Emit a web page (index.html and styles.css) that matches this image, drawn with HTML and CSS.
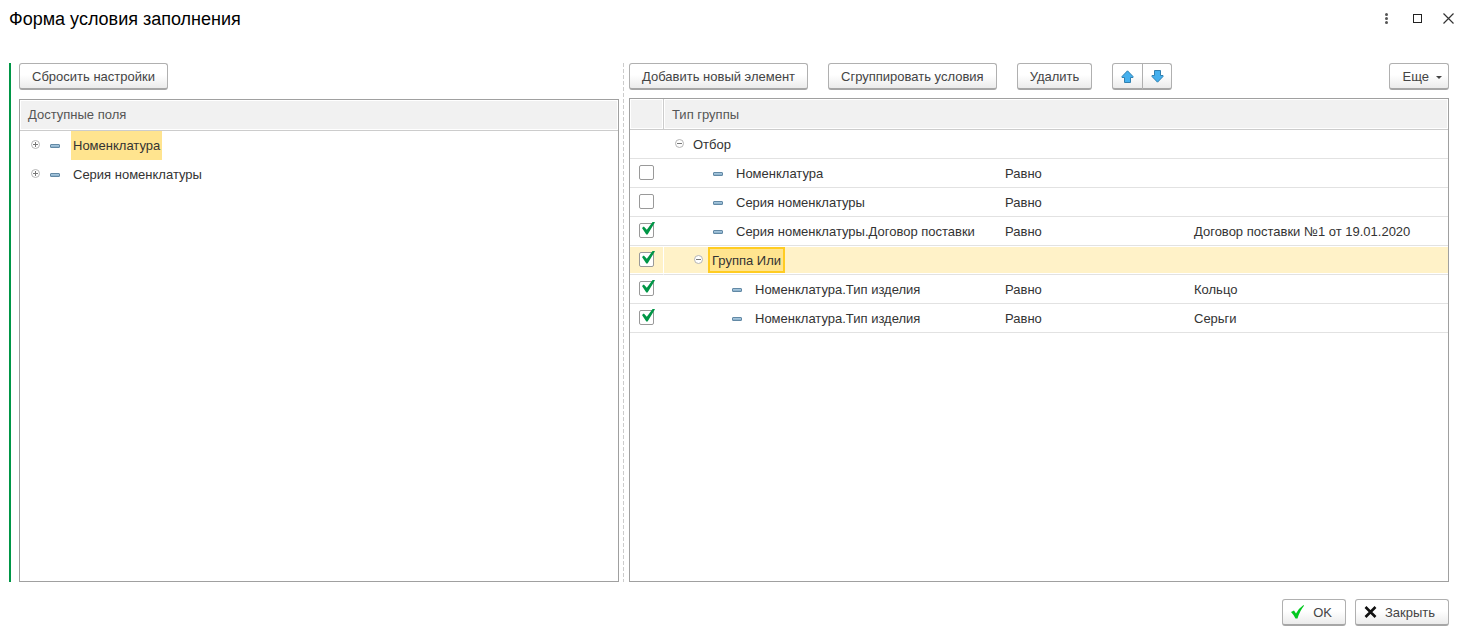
FILE: index.html
```html
<!DOCTYPE html>
<html lang="ru">
<head>
<meta charset="utf-8">
<meta name="viewport" content="width=device-width, initial-scale=1">
<title>Форма условия заполнения</title>
<link rel="stylesheet" href="styles.css">
</head>
<body>
<svg class="sprites" width="0" height="0" aria-hidden="true">
  <defs>
    <linearGradient id="dash-fill" x1="0" y1="0" x2="0" y2="1">
      <stop offset="0" stop-color="#b5d3e8"/><stop offset="1" stop-color="#7fa6c1"/>
    </linearGradient>
  </defs>
  <symbol id="plus" viewBox="0 0 9 9"><circle cx="4.5" cy="4.5" r="4" fill="#fff" stroke="#b4b4b4"/><path d="M2 4.5h5M4.5 2v5" stroke="#777"/></symbol>
  <symbol id="minus" viewBox="0 0 9 9"><circle cx="4.5" cy="4.5" r="4" fill="#fff" stroke="#b4b4b4"/><path d="M2 4.5h5" stroke="#777"/></symbol>
  <symbol id="dash" viewBox="0 0 10 4"><rect x=".5" y=".5" width="9" height="3" rx=".5" fill="url(#dash-fill)" stroke="#6289a5"/></symbol>
</svg>
<header class="titlebar">
  <h1 class="title">Форма условия заполнения</h1>
  <div class="window-actions">
    <button class="win-btn" aria-label="Меню"><svg width="11" height="11" viewBox="0 0 11 11" fill="#555"><circle cx="5.5" cy="1.5" r="1.5"/><circle cx="5.5" cy="5.5" r="1.5"/><circle cx="5.5" cy="9.5" r="1.5"/></svg></button>
    <button class="win-btn" aria-label="Развернуть"><svg width="9" height="9" viewBox="0 0 9 9"><rect x=".5" y=".5" width="8" height="8" fill="none" stroke="#222"/></svg></button>
    <button class="win-btn" aria-label="Закрыть окно"><svg width="11" height="11" viewBox="0 0 11 11"><path d="M.5 .5l10 10M10.5 .5l-10 10" stroke="#333" stroke-width="1.2"/></svg></button>
  </div>
</header>
<main class="workspace">
  <section class="fields">
    <div class="toolbar"><button class="btn">Сбросить настройки</button></div>
    <div class="panel">
      <h2 class="panel-head">Доступные поля</h2>
      <ul class="tree">
        <li class="tree-item"><svg class="toggle"><use href="#plus"/></svg><svg class="dash"><use href="#dash"/></svg><span class="tree-label current">Номенклатура</span></li>
        <li class="tree-item"><svg class="toggle"><use href="#plus"/></svg><svg class="dash"><use href="#dash"/></svg><span class="tree-label">Серия номенклатуры</span></li>
      </ul>
    </div>
  </section>
  <div class="splitter"></div>
  <section class="conditions">
    <div class="toolbar">
      <button class="btn">Добавить новый элемент</button>
      <button class="btn">Сгруппировать условия</button>
      <button class="btn">Удалить</button>
      <div class="btn-group">
        <button class="btn arrow" aria-label="Вверх"><svg width="13" height="13" viewBox="0 0 13 13"><path d="M6.5 .8L12 6.5V7.5H9.5V12.5H3.5V7.5H1V6.5Z" fill="#45b0ee" stroke="#3080b0"/></svg></button>
        <button class="btn arrow" aria-label="Вниз"><svg width="13" height="13" viewBox="0 0 13 13"><path d="M6.5 12.2L12 6.5V5.5H9.5V.5H3.5V5.5H1V6.5Z" fill="#45b0ee" stroke="#3080b0"/></svg></button>
      </div>
      <button class="btn more">Еще<svg width="6" height="3" viewBox="0 0 6 3"><path d="M0 0h6L3 3z" fill="#444"/></svg></button>
    </div>
    <div class="panel">
      <table class="grid">
        <colgroup><col class="col-check"><col class="col-name"><col class="col-op"><col></colgroup>
        <thead><tr><th></th><th colspan="3" scope="colgroup">Тип группы</th></tr></thead>
        <tbody>
          <tr><td></td><td><div class="node"><svg class="toggle"><use href="#minus"/></svg><span>Отбор</span></div></td><td></td><td></td></tr>
          <tr><td><input class="check" type="checkbox" aria-label="Номенклатура"></td><td><div class="node leaf"><svg class="dash"><use href="#dash"/></svg><span>Номенклатура</span></div></td><td>Равно</td><td></td></tr>
          <tr><td><input class="check" type="checkbox" aria-label="Серия номенклатуры"></td><td><div class="node leaf"><svg class="dash"><use href="#dash"/></svg><span>Серия номенклатуры</span></div></td><td>Равно</td><td></td></tr>
          <tr><td><input class="check" type="checkbox" checked aria-label="Серия номенклатуры.Договор поставки"></td><td><div class="node leaf"><svg class="dash"><use href="#dash"/></svg><span>Серия номенклатуры.Договор поставки</span></div></td><td>Равно</td><td>Договор поставки №1 от 19.01.2020</td></tr>
          <tr class="selected"><td><input class="check" type="checkbox" checked aria-label="Группа Или"></td><td><div class="node group"><svg class="toggle"><use href="#minus"/></svg><span class="focus">Группа Или</span></div></td><td></td><td></td></tr>
          <tr><td><input class="check" type="checkbox" checked aria-label="Номенклатура.Тип изделия: Кольцо"></td><td><div class="node deep"><svg class="dash"><use href="#dash"/></svg><span>Номенклатура.Тип изделия</span></div></td><td>Равно</td><td>Кольцо</td></tr>
          <tr><td><input class="check" type="checkbox" checked aria-label="Номенклатура.Тип изделия: Серьги"></td><td><div class="node deep"><svg class="dash"><use href="#dash"/></svg><span>Номенклатура.Тип изделия</span></div></td><td>Равно</td><td>Серьги</td></tr>
        </tbody>
      </table>
    </div>
  </section>
</main>
<footer class="footer">
  <button class="btn icon-btn"><svg width="14" height="14" viewBox="0 0 14 14"><path d="M0 7L3 5.500L5 8.500Q8 3 12.500 0L13 .8Q9 5.500 6.500 13.500H4.500Q3 10 0 7Z" fill="#00c81e"/></svg>OK</button>
  <button class="btn icon-btn"><svg width="13" height="12" viewBox="0 0 13 12"><path d="M1.500 1l10 10M11.500 1l-10 10" stroke="#111" stroke-width="2.600"/></svg>Закрыть</button>
</footer>
</body>
</html>
```
FILE: styles.css
```css
* { box-sizing: border-box; }

body {
  margin: 0;
  min-height: 100vh;
  display: flex;
  flex-direction: column;
  padding: 0 16px 9px 9px;
  background: #fff;
  color: #333;
  font: 13px/16px "Liberation Sans", Arial, sans-serif;
}

.sprites { position: absolute; }

svg { flex: none; display: block; }

.titlebar {
  display: flex;
  justify-content: space-between;
  align-items: center;
  height: 37px;
  margin: 0 -9px 26px 0;
}

.title {
  margin: 0;
  color: #000;
  font-size: 18px;
  line-height: 20px;
  font-weight: 400;
}

.window-actions { display: flex; gap: 11px; }

.win-btn {
  display: grid;
  place-items: center;
  width: 20px;
  height: 20px;
  padding: 0;
  border: 0;
  background: none;
}

.workspace {
  flex: 1;
  display: flex;
  border-left: 2px solid #009646;
  padding-left: 8px;
}

.fields,
.conditions {
  display: flex;
  flex-direction: column;
  min-width: 0;
}

.fields { flex: 600 1 0; gap: 9px; }
.conditions { flex: 820 1 0; gap: 8px; }

.splitter {
  width: 1px;
  margin: 0 5px 0 4px;
  background: repeating-linear-gradient(#ccc 0 4px, transparent 4px 6px);
}

.toolbar { display: flex; gap: 20px; }

.btn {
  height: 27px;
  padding: 2px 12px 0;
  border: 1px solid #b0b0b0;
  border-bottom: 2px solid #a6a6a6;
  border-radius: 3px;
  background: linear-gradient(#fff 45%, #ebebeb);
  color: #444;
  font: inherit;
  white-space: nowrap;
}

.btn-group { display: flex; }

.arrow {
  display: grid;
  place-items: center;
  width: 31px;
  padding: 0;
}

.arrow:first-child { border-radius: 3px 0 0 3px; }
.arrow:last-child { width: 30px; margin-left: -1px; border-radius: 0 3px 3px 0; }

.more {
  display: flex;
  align-items: center;
  gap: 7px;
  margin-left: auto;
  padding: 2px 6px 0 13px;
}

.panel {
  flex: 1;
  border: 1px solid #a0a0a0;
  overflow: hidden;
}

.panel-head,
.grid th {
  height: 31px;
  margin: 0;
  padding: 0 8px;
  border-bottom: 1px solid #ccc;
  background: #f1f1f1;
  box-shadow: inset 0 0 0 1px #fff;
  color: #555;
  font-size: 13px;
  line-height: 29px;
  font-weight: 400;
  text-align: left;
}

.tree { margin: 0; padding: 0 0 0 11px; list-style: none; }

.tree-item { display: flex; align-items: center; height: 29px; }

.tree-label { margin-left: 11px; padding: 0 2px; line-height: 29px; }

.current { background: #ffe48f; }

.toggle { width: 9px; height: 9px; margin-bottom: 2px; }

.dash { width: 10px; height: 4px; }

.tree-item .dash { margin-left: 10px; }

.grid {
  width: 100%;
  border-collapse: separate;
  border-spacing: 0;
  table-layout: fixed;
}

.col-check { width: 34px; }
.col-name { width: 333px; }
.col-op { width: 189px; }

.grid th:first-child { border-right: 1px solid #ccc; }

.grid td {
  height: 29px;
  padding: 0 8px;
  border-bottom: 1px solid #e2e2e2;
  white-space: nowrap;
}

.grid td:nth-child(n + 3) { padding-top: 2px; }

.node { display: flex; align-items: center; gap: 9px; padding-left: 3px; }
.node span { padding-top: 2px; }
.leaf { gap: 13px; padding-left: 41px; }
.deep { gap: 13px; padding-left: 60px; }
.group { gap: 5px; padding-left: 22px; }

.node .dash { margin-top: 2px; }

.grid .selected td {
  background: #fff2c8;
  box-shadow: inset 0 1px #fff, inset 0 -1px #fff;
}

.grid .selected td:first-child { border-right: 1px solid #fff; }

.node .focus {
  padding: 4px 2px 2px;
  border: 2px solid #fc2;
  background: #ffe48f;
}

.grid .check {
  appearance: none;
  display: block;
  width: 15px;
  height: 15px;
  margin: 0 0 2px 1px;
  border: 1px solid #999;
  border-radius: 2px;
  background: #fff;
  position: relative;
}

.check:checked::after {
  content: "";
  position: absolute;
  left: 2px;
  top: -2px;
  width: 13px;
  height: 13px;
  background: #009646;
  clip-path: polygon(0 50%, 14% 38%, 37% 63%, 84% 0, 100% 5%, 43% 100%, 33% 100%);
}

.footer {
  display: flex;
  justify-content: flex-end;
  gap: 9px;
  margin-top: 17px;
}

.icon-btn {
  display: flex;
  align-items: center;
  gap: 8px;
  padding: 2px 13px 0 8px;
}

.icon-btn svg { margin-bottom: 2px; }
```
